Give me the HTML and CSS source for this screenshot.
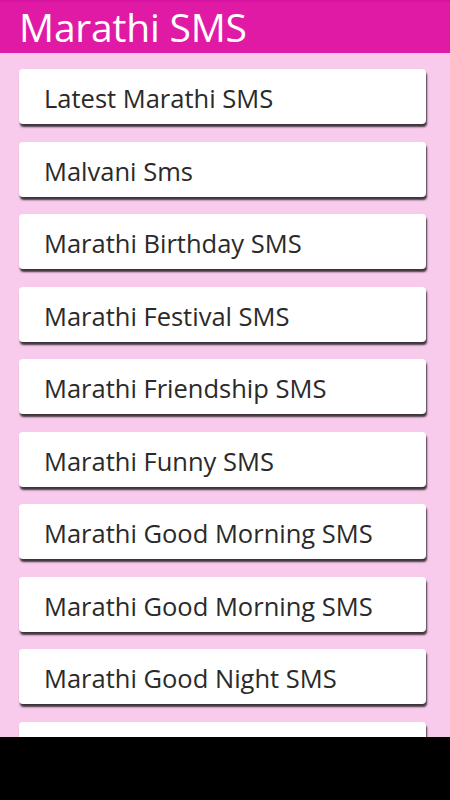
FILE: index.html
```html
<!DOCTYPE html>
<html>
<head>
<meta charset="utf-8">
<link rel="stylesheet" href="styles.css">
</head>
<body>
<div class="screen">
  <header class="bar"><h1 class="title">Marathi SMS</h1></header>
  <main class="list">
    <div class="card">Latest Marathi SMS</div>
    <div class="card">Malvani Sms</div>
    <div class="card">Marathi Birthday SMS</div>
    <div class="card">Marathi Festival SMS</div>
    <div class="card">Marathi Friendship SMS</div>
    <div class="card">Marathi Funny SMS</div>
    <div class="card">Marathi Good Morning SMS</div>
    <div class="card">Marathi Good Morning SMS</div>
    <div class="card">Marathi Good Night SMS</div>
    <div class="card"></div>
  </main>
  <div class="navbar"></div>
</div>
</body>
</html>
```
FILE: styles.css
```css
html, body { margin: 0; padding: 0; }
body { width: 450px; height: 800px; overflow: hidden; font-family: "Open Sans", "DejaVu Sans", sans-serif; }
.screen { width: 450px; height: 800px; display: flex; flex-direction: column; background: #f8cbec; }
.bar { height: 53px; background: #e11aa5; border-top: 2px solid #d414a0; box-sizing: border-box; flex: none; }
.title { margin: 0; padding-left: 19px; color: #fff; font-weight: 400; font-size: 39px; line-height: 50px; letter-spacing: -0.2px; }
.list { flex: 1; overflow: hidden; padding: 16px 24px 0 19px; display: flex; flex-direction: column; gap: 17.5px; }
.card { flex: none; height: 55px; background: #fff; border-radius: 4px; box-shadow: 1px 3px 2px rgba(0,0,0,0.75); display: flex; align-items: center; padding: 3px 0 0 25px; box-sizing: border-box; font-size: 25.5px; color: #2a2a2a; }
.navbar { height: 63px; background: #000; flex: none; }
```
